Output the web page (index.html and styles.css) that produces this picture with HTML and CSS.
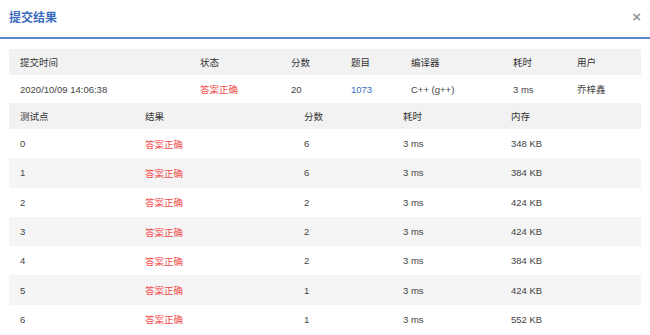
FILE: index.html
```html
<!DOCTYPE html>
<html lang="zh-CN">
<head>
    <meta charset="UTF-8">
    <title>提交结果</title>
    <link rel="stylesheet" href="styles.css">
</head>
<body>
    <div class="modal">
        <div class="modal-header">
            <h3 class="modal-title">提交结果</h3>
            <span class="close">×</span>
        </div>

        <div class="modal-body">
            <!-- 提交概要 -->
            <table class="result-table summary">
                <colgroup>
                    <col style="width:180px">
                    <col style="width:91px">
                    <col style="width:60px">
                    <col style="width:60px">
                    <col style="width:102px">
                    <col style="width:64px">
                    <col>
                </colgroup>
                <thead>
                    <tr>
                        <th>提交时间</th>
                        <th>状态</th>
                        <th>分数</th>
                        <th>题目</th>
                        <th>编译器</th>
                        <th>耗时</th>
                        <th>用户</th>
                    </tr>
                </thead>
                <tbody>
                    <tr>
                        <td>2020/10/09 14:06:38</td>
                        <td class="accepted">答案正确</td>
                        <td>20</td>
                        <td><a class="problem-link">1073</a></td>
                        <td>C++ (g++)</td>
                        <td>3 ms</td>
                        <td>乔梓鑫</td>
                    </tr>
                </tbody>
            </table>

            <!-- 测试点详情 -->
            <table class="result-table cases">
                <colgroup>
                    <col style="width:125px">
                    <col style="width:159px">
                    <col style="width:99px">
                    <col style="width:108px">
                    <col>
                </colgroup>
                <thead>
                    <tr>
                        <th>测试点</th>
                        <th>结果</th>
                        <th>分数</th>
                        <th>耗时</th>
                        <th>内存</th>
                    </tr>
                </thead>
                <tbody>
                    <tr><td>0</td><td class="accepted">答案正确</td><td>6</td><td>3 ms</td><td>348 KB</td></tr>
                    <tr><td>1</td><td class="accepted">答案正确</td><td>6</td><td>3 ms</td><td>384 KB</td></tr>
                    <tr><td>2</td><td class="accepted">答案正确</td><td>2</td><td>3 ms</td><td>424 KB</td></tr>
                    <tr><td>3</td><td class="accepted">答案正确</td><td>2</td><td>3 ms</td><td>424 KB</td></tr>
                    <tr><td>4</td><td class="accepted">答案正确</td><td>2</td><td>3 ms</td><td>384 KB</td></tr>
                    <tr><td>5</td><td class="accepted">答案正确</td><td>1</td><td>3 ms</td><td>424 KB</td></tr>
                    <tr><td>6</td><td class="accepted">答案正确</td><td>1</td><td>3 ms</td><td>552 KB</td></tr>
                </tbody>
            </table>
        </div>
    </div>
</body>
</html>
```

FILE: styles.css
```css
* {
    margin: 0;
    padding: 0;
    box-sizing: border-box;
}

body {
    font-family: 'Liberation Sans', 'Noto Sans CJK SC', sans-serif;
    background-color: #fff;
    color: #333;
    overflow: hidden;
}

.modal-header {
    height: 39px;
    padding: 0 9px;
    display: flex;
    align-items: center;
    justify-content: space-between;
    border-bottom: 2px solid #5b86cf;
}

.modal-title {
    font-size: 12px;
    font-weight: bold;
    color: #3b6cc0;
    margin-top: -4px;
}

.close {
    font-size: 15px;
    font-weight: bold;
    color: #999;
    margin-right: 0;
    margin-top: -4px;
}

.modal-body {
    padding: 10px 9px 0;
}

.result-table {
    width: 632px;
    border-collapse: collapse;
    table-layout: fixed;
    font-size: 9.5px;
}

.result-table th,
.result-table td {
    text-align: left;
    padding: 0 0 0 11px;
    white-space: nowrap;
}

.result-table th {
    font-weight: normal;
    color: #333;
    background-color: #f2f2f2;
}

.result-table td {
    color: #444;
}

.summary thead tr {
    height: 26px;
}

.summary tbody tr {
    height: 28px;
}

.cases thead tr {
    height: 26px;
}

.cases tbody tr {
    height: 29.3px;
}

.cases tbody tr:nth-child(even) {
    background-color: #f5f5f5;
}

.accepted {
    color: #f04b4b !important;
}

.problem-link {
    color: #3b6cc0;
    text-decoration: none;
}
```
